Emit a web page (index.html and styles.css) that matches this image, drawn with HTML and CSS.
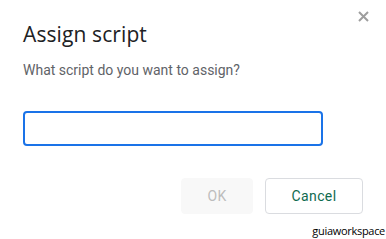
FILE: index.html
```html
<!DOCTYPE html>
<html>
<head>
<meta charset="utf-8">
<link rel="stylesheet" href="styles.css">
</head>
<body>
<div class="dialog">
  <button class="close" aria-label="Close">
    <svg width="11" height="11" viewBox="0 0 11 11"><path d="M1 1L10 10M10 1L1 10" stroke="#9e9e9e" stroke-width="2"/></svg>
  </button>
  <h1 class="title">Assign script</h1>
  <p class="prompt">What script do you want to assign?</p>
  <input class="field" type="text">
  <div class="actions">
    <button class="btn ok" disabled>OK</button>
    <button class="btn cancel">Cancel</button>
  </div>
  <div class="watermark">guiaworkspace</div>
</div>
</body>
</html>
```
FILE: styles.css
```css
html, body {
  margin: 0;
  padding: 0;
  background: #ffffff;
}
.dialog {
  position: relative;
  width: 386px;
  height: 239px;
  box-sizing: border-box;
  padding: 21px 0 0 23px;
  font-family: Roboto, "Liberation Sans", sans-serif;
}
.close {
  position: absolute;
  top: 11px;
  left: 358px;
  padding: 0;
  border: 0;
  background: none;
  width: 11px;
  height: 11px;
  display: block;
}
.close svg { display: block; }
.title {
  margin: 0;
  font-family: "Open Sans", Roboto, sans-serif;
  font-weight: 400;
  font-size: 21px;
  line-height: 26px;
  color: #202124;
  letter-spacing: 0.1px;
}
.prompt {
  margin: 13px 0 0 0;
  font-size: 14px;
  line-height: 20px;
  color: #5f6368;
}
.field {
  display: block;
  margin-top: 31px;
  width: 300px;
  height: 35px;
  box-sizing: border-box;
  border: 2px solid #1a73e8;
  border-radius: 4px;
  outline: none;
  padding: 0 8px;
}
.actions {
  display: flex;
  gap: 12px;
  margin: 32px 0 0 158px;
}
.btn {
  height: 36px;
  box-sizing: border-box;
  border-radius: 4px;
  font-family: Roboto, "Liberation Sans", sans-serif;
  font-size: 14px;
  font-weight: 400;
  letter-spacing: 0.4px;
  padding: 0;
}
.ok {
  width: 72px;
  background: #f8f8f8;
  border: 1px solid #f8f8f8;
  color: #bdbdbd;
}
.cancel {
  width: 98px;
  background: #ffffff;
  border: 1px solid #dadce0;
  color: #0f6b4f;
}
.watermark {
  position: absolute;
  right: 1px;
  bottom: 2px;
  font-family: "Open Sans", sans-serif;
  font-size: 11px;
  line-height: 12px;
  color: #000;
  letter-spacing: -0.3px;
}
```
